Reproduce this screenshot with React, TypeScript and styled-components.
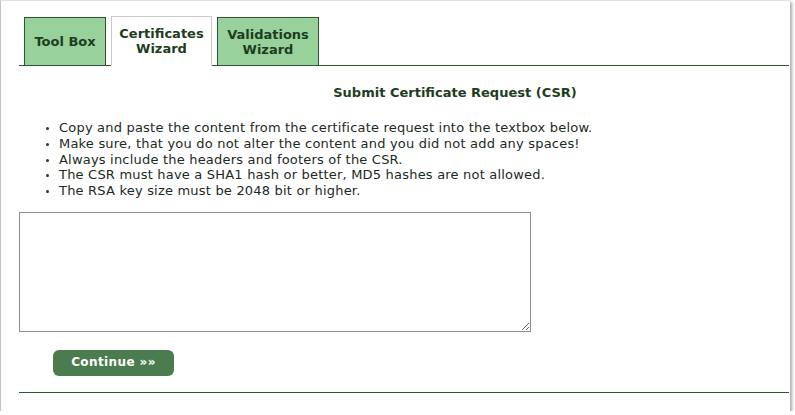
import React from "react";
import styled, { createGlobalStyle } from "styled-components";

const Global = createGlobalStyle`
  html, body { margin: 0; padding: 0; background: #ffffff; }
  body { font-family: "DejaVu Sans", Verdana, sans-serif; }
`;

const Frame = styled.div`
  box-sizing: border-box;
  width: 790px;
  height: 411px;
  background: #ffffff;
  border-top: 1px solid #e2e2e2;
  border-left: 1px solid #c4c4c4;
  box-shadow: 2px 2px 3px rgba(0, 0, 0, 0.35);
  padding: 15px 1px 0 18px;
  display: flex;
  flex-direction: column;
`;

const TabBar = styled.div`
  display: flex;
  align-items: flex-end;
  gap: 5px;
  padding-left: 5px;
  height: 49px;
  border-bottom: 1px solid #2c5530;
`;

const Tab = styled.div<{ $active?: boolean; $w: number }>`
  box-sizing: border-box;
  width: ${(p) => p.$w}px;
  height: ${(p) => (p.$active ? 50 : 49)}px;
  margin-bottom: -1px;
  display: flex;
  align-items: center;
  justify-content: center;
  text-align: center;
  font-size: 13px;
  font-weight: bold;
  line-height: 15px;
  color: #1d3d21;
  background: ${(p) => (p.$active ? "#ffffff" : "#98d19b")};
  border: 1px solid ${(p) => (p.$active ? "#c9c9c9" : "#2c5530")};
  border-bottom: 1px solid ${(p) => (p.$active ? "#ffffff" : "#2c5530")};
  padding-bottom: ${(p) => (p.$active ? 1 : 0)}px;
`;

const Heading = styled.h1`
  margin: 19px 0 0;
  padding-left: 102px;
  text-align: center;
  font-size: 13px;
  line-height: 16px;
  font-weight: bold;
  color: #1d3d21;
`;

const Rules = styled.ul`
  margin: 19px 0 0;
  padding-left: 40px;
  list-style: disc;
  font-size: 13px;
  line-height: 15.75px;
  letter-spacing: 0.2px;
  color: #1c2a1d;
`;

const Rule = styled.li`
  &::marker {
    font-size: 10px;
    color: #1d3d21;
  }
`;

const CsrBox = styled.textarea`
  box-sizing: border-box;
  margin-top: 13px;
  width: 512px;
  height: 120px;
  border: 1px solid #8e8e8e;
  resize: both;
  font-family: "Liberation Mono", monospace;
  font-size: 12px;
  outline: none;
`;

const Actions = styled.div`
  display: flex;
  padding: 18px 0 0 34px;
  height: 26px;
`;

const Continue = styled.button`
  box-sizing: border-box;
  width: 121px;
  height: 26px;
  border: none;
  border-radius: 6px;
  background: #4b7c4e;
  color: #ffffff;
  font-family: "DejaVu Sans", Verdana, sans-serif;
  font-size: 12px;
  font-weight: bold;
  letter-spacing: 0.4px;
  padding: 0 0 1px 0;
  cursor: pointer;
`;

const Footer = styled.div`
  margin-top: 16px;
  border-bottom: 1px solid #2c5530;
`;

export default function App() {
  return (
    <>
      <Global />
      <Frame>
        <TabBar>
          <Tab $w={82}>Tool Box</Tab>
          <Tab $w={101} $active>
            Certificates
            <br />
            Wizard
          </Tab>
          <Tab $w={102}>
            Validations
            <br />
            Wizard
          </Tab>
        </TabBar>
        <Heading>Submit Certificate Request (CSR)</Heading>
        <Rules>
          <Rule>Copy and paste the content from the certificate request into the textbox below.</Rule>
          <Rule>Make sure, that you do not alter the content and you did not add any spaces!</Rule>
          <Rule>Always include the headers and footers of the CSR.</Rule>
          <Rule>The CSR must have a SHA1 hash or better, MD5 hashes are not allowed.</Rule>
          <Rule>The RSA key size must be 2048 bit or higher.</Rule>
        </Rules>
        <CsrBox />
        <Actions>
          <Continue>Continue »»</Continue>
        </Actions>
        <Footer />
      </Frame>
    </>
  );
}
